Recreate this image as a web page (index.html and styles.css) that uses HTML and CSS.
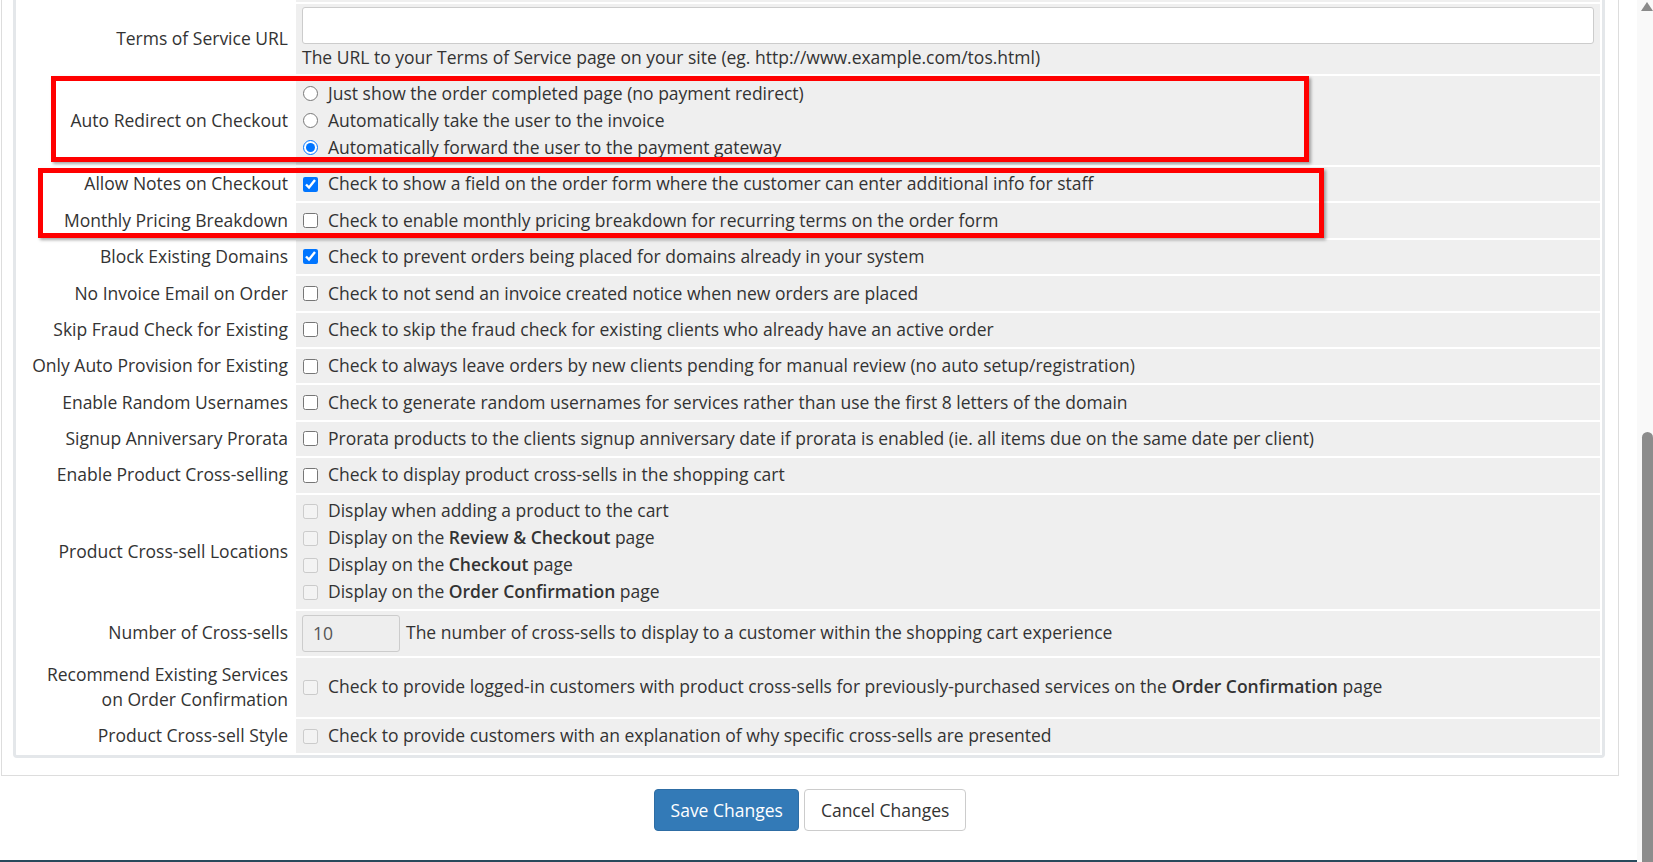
FILE: index.html
```html
<!DOCTYPE html>
<html lang="en">
<head>
    <meta charset="UTF-8">
    <meta name="viewport" content="width=device-width, initial-scale=1.0">
    <title>Ordering Settings</title>
    <link rel="stylesheet" href="styles.css">
</head>
<body>
<div class="viewport">
    <main class="content">
        <div class="panel">
            <div class="settings-box">
                <table class="form">
                    <!-- bottom edge of the row scrolled out of view -->
                    <tr class="cut"><td class="fieldlabel"></td><td class="fieldarea"></td></tr>

                    <tr>
                        <td class="fieldlabel">Terms of Service URL</td>
                        <td class="fieldarea">
                            <input type="text" class="text-input" value="">
                            <div class="help">The URL to your Terms of Service page on your site (eg. http://www.example.com/tos.html)</div>
                        </td>
                    </tr>
                    <tr>
                        <td class="fieldlabel">Auto Redirect on Checkout</td>
                        <td class="fieldarea list radios">
                            <label class="line"><input type="radio" name="redirect">Just show the order completed page (no payment redirect)</label>
                            <label class="line"><input type="radio" name="redirect">Automatically take the user to the invoice</label>
                            <label class="line"><input type="radio" name="redirect" checked>Automatically forward the user to the payment gateway</label>
                        </td>
                    </tr>
                    <tr>
                        <td class="fieldlabel">Allow Notes on Checkout</td>
                        <td class="fieldarea"><label class="line"><input type="checkbox" checked>Check to show a field on the order form where the customer can enter additional info for staff</label></td>
                    </tr>
                    <tr>
                        <td class="fieldlabel">Monthly Pricing Breakdown</td>
                        <td class="fieldarea"><label class="line"><input type="checkbox">Check to enable monthly pricing breakdown for recurring terms on the order form</label></td>
                    </tr>
                    <tr>
                        <td class="fieldlabel">Block Existing Domains</td>
                        <td class="fieldarea"><label class="line"><input type="checkbox" checked>Check to prevent orders being placed for domains already in your system</label></td>
                    </tr>
                    <tr>
                        <td class="fieldlabel">No Invoice Email on Order</td>
                        <td class="fieldarea"><label class="line"><input type="checkbox">Check to not send an invoice created notice when new orders are placed</label></td>
                    </tr>
                    <tr>
                        <td class="fieldlabel">Skip Fraud Check for Existing</td>
                        <td class="fieldarea"><label class="line"><input type="checkbox">Check to skip the fraud check for existing clients who already have an active order</label></td>
                    </tr>
                    <tr>
                        <td class="fieldlabel">Only Auto Provision for Existing</td>
                        <td class="fieldarea"><label class="line"><input type="checkbox">Check to always leave orders by new clients pending for manual review (no auto setup/registration)</label></td>
                    </tr>
                    <tr>
                        <td class="fieldlabel">Enable Random Usernames</td>
                        <td class="fieldarea"><label class="line"><input type="checkbox">Check to generate random usernames for services rather than use the first 8 letters of the domain</label></td>
                    </tr>
                    <tr>
                        <td class="fieldlabel">Signup Anniversary Prorata</td>
                        <td class="fieldarea"><label class="line"><input type="checkbox">Prorata products to the clients signup anniversary date if prorata is enabled (ie. all items due on the same date per client)</label></td>
                    </tr>
                    <tr>
                        <td class="fieldlabel">Enable Product Cross-selling</td>
                        <td class="fieldarea"><label class="line"><input type="checkbox">Check to display product cross-sells in the shopping cart</label></td>
                    </tr>
                    <tr>
                        <td class="fieldlabel">Product Cross-sell Locations</td>
                        <td class="fieldarea list">
                            <label class="line"><input type="checkbox" disabled>Display when adding a product to the cart</label>
                            <label class="line"><input type="checkbox" disabled><span>Display on the <b>Review &amp; Checkout</b> page</span></label>
                            <label class="line"><input type="checkbox" disabled><span>Display on the <b>Checkout</b> page</span></label>
                            <label class="line"><input type="checkbox" disabled><span>Display on the <b>Order Confirmation</b> page</span></label>
                        </td>
                    </tr>
                    <tr>
                        <td class="fieldlabel">Number of Cross-sells</td>
                        <td class="fieldarea tall">
                            <div class="line-input">
                                <input type="text" class="num-input" value="10" disabled>
                                <span>The number of cross-sells to display to a customer within the shopping cart experience</span>
                            </div>
                        </td>
                    </tr>
                    <tr class="two-line">
                        <td class="fieldlabel">Recommend Existing Services<br>on Order Confirmation</td>
                        <td class="fieldarea"><label class="line"><input type="checkbox" disabled><span>Check to provide logged-in customers with product cross-sells for previously-purchased services on the <b>Order Confirmation</b> page</span></label></td>
                    </tr>
                    <tr>
                        <td class="fieldlabel">Product Cross-sell Style</td>
                        <td class="fieldarea"><label class="line"><input type="checkbox" disabled>Check to provide customers with an explanation of why specific cross-sells are presented</label></td>
                    </tr>
                </table>
            </div>
        </div>

        <div class="btn-bar">
            <button type="submit" class="btn btn-primary">Save Changes</button>
            <button type="reset" class="btn btn-default">Cancel Changes</button>
        </div>

        <div class="footer-line"></div>
    </main>

    <div class="scrollbar">
        <span class="arrow-up"></span>
        <div class="thumb"></div>
    </div>
</div>

<!-- red highlight annotations drawn over the screenshot -->
<div class="mark mark-redirect"></div>
<div class="mark mark-notes"></div>
</body>
</html>
```

FILE: styles.css
```css
body {
    margin: 0;
    font-family: "Open Sans", "Liberation Sans", sans-serif;
    font-size: 17.5px;
    line-height: 25.7px;
    color: #333;
    background: #fff;
    overflow: hidden;
}

.viewport {
    display: flex;
    height: 862px;
}

.content {
    flex: 1;
    min-width: 0;
    display: flex;
    flex-direction: column;
}

/* outer panel, top scrolled off */
.panel {
    margin-left: 1px;
    width: 1618px;
    box-sizing: border-box;
    border: 1px solid #ddd;
    border-top: none;
    padding: 0 13px 17px 11px;
}

.settings-box {
    border: 3px solid #e4e7ea;
    border-top: none;
    border-radius: 0 0 4px 4px;
}

.form {
    width: 100%;
    table-layout: fixed;
    border-collapse: separate;
    border-spacing: 2px;
    margin-top: -2px;
}

.form td {
    padding: 3px 6px;
    vertical-align: middle;
}

.form .fieldlabel {
    width: 276px;
    box-sizing: border-box;
    text-align: right;
    white-space: nowrap;
    background: #fff;
}

.form .fieldarea {
    background: #efefef;
}

.form .fieldarea.radios {
    padding-top: 4px;
    padding-bottom: 4px;
}

.form .fieldarea.tall {
    padding-top: 4px;
    padding-bottom: 4px;
}

.form .two-line .fieldlabel {
    padding-top: 4px;
    padding-bottom: 4px;
}

.form .cut td {
    height: 2px;
    padding: 0;
}

.line {
    display: flex;
    align-items: center;
    height: 28.4px;
    white-space: nowrap;
}

.list .line {
    height: 27px;
}

.line input {
    width: 15px;
    height: 15px;
    margin: 0 10px 0 1px;
    flex: none;
}

.line b {
    font-weight: 600;
}

.text-input {
    display: block;
    width: 100%;
    height: 37px;
    box-sizing: border-box;
    margin: 0;
    border: 1px solid #ccc;
    border-radius: 3px;
    background: #fff;
}

.help {
    line-height: 27px;
}

.line-input {
    display: flex;
    align-items: center;
}

.num-input {
    width: 98px;
    height: 37px;
    box-sizing: border-box;
    margin: 0 6px 0 0;
    padding: 0 10px;
    border: 1px solid #ccc;
    border-radius: 3px;
    background: #eee;
    font-family: inherit;
    font-size: 17.5px;
    color: #555;
}

/* buttons */
.btn-bar {
    width: 1620px;
    display: flex;
    justify-content: center;
    gap: 5px;
    margin-top: 13px;
}

.btn {
    height: 42px;
    padding: 0 15.5px;
    font-family: inherit;
    font-size: 17.5px;
    border-radius: 4px;
    border: 1px solid transparent;
    cursor: pointer;
}

.btn-primary {
    background-color: #337ab7;
    border-color: #2e6da4;
    color: #fff;
}

.btn-default {
    background-color: #fff;
    border-color: #ccc;
    color: #333;
}

.footer-line {
    margin-top: auto;
    height: 2px;
    background: #284a5c;
}

/* fake scrollbar */
.scrollbar {
    width: 16px;
    background: #f9f9f9;
    display: flex;
    flex-direction: column;
    align-items: flex-end;
}

.arrow-up {
    margin: 2px 0 0;
    width: 0;
    height: 0;
    border-left: 6px solid transparent;
    border-right: 6px solid transparent;
    border-bottom: 9px solid #8a8a8a;
}

.thumb {
    margin-top: 421px;
    width: 11px;
    flex: 1;
    background: #8c8c8c;
    border-radius: 6px 6px 0 0;
}

/* annotation boxes */
.mark {
    position: absolute;
    box-sizing: border-box;
    border: 5px solid #ff0000;
    box-shadow: 2px 2px 3px rgba(0, 0, 0, 0.35);
}

.mark-redirect {
    left: 51px;
    top: 76px;
    width: 1258px;
    height: 86px;
}

.mark-notes {
    left: 38px;
    top: 168px;
    width: 1286px;
    height: 70px;
}
```
